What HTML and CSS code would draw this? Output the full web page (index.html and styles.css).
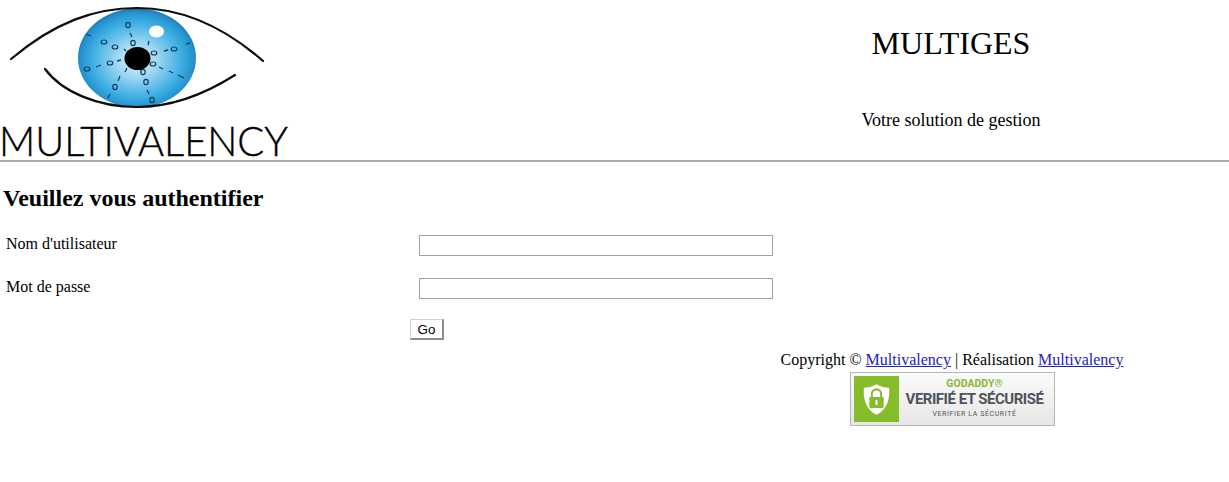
FILE: index.html
```html
<!DOCTYPE html>
<html lang="fr">
<head>
<meta charset="utf-8">
<title>MULTIGES</title>
<link rel="stylesheet" href="styles.css">
</head>
<body>
<header class="top">
  <svg class="logo" width="290" height="160" viewBox="0 0 290 160" role="img" aria-label="Multivalency">
    <defs>
      <radialGradient id="iris" cx="50%" cy="52%" r="52%">
        <stop offset="0" stop-color="#dff3fb"/>
        <stop offset="0.35" stop-color="#9bd6f1"/>
        <stop offset="0.72" stop-color="#3fb0e4"/>
        <stop offset="0.93" stop-color="#2391cf"/>
        <stop offset="1" stop-color="#1f78ab"/>
      </radialGradient>
    </defs>
    <ellipse cx="137" cy="58" rx="59" ry="49.5" fill="url(#iris)"/>
    <path class="lid" d="M11 59C55 22 95 8 137 8C180 8 222 25 263 61"/>
    <path class="lid" d="M45 69C62 92 98 107 137 107C170 107 205 94 235 75"/>
    <g class="dashes">
      <path d="M130 33L132 37M149 41L148 45M124 49L126 51M91 36L86 34M186 44L190 43M164 51L168 50M96 67L101 65M117 61L121 60M127 68L125 72M120 76L118 81M110 94L108 98M147 90L149 94M159 67L163 69M169 71L173 73M178 75L184 78"/>
    </g>
    <g class="zeros">
      <ellipse cx="128" cy="25" rx="2.2" ry="2.6"/>
      <ellipse cx="133" cy="43" rx="2.2" ry="2.6"/>
      <ellipse cx="104" cy="42" rx="2.8" ry="2"/>
      <ellipse cx="115" cy="47" rx="2.8" ry="2"/>
      <ellipse cx="174" cy="49" rx="2.8" ry="2"/>
      <ellipse cx="154" cy="53" rx="2.8" ry="2"/>
      <ellipse cx="110" cy="63" rx="2.8" ry="2"/>
      <ellipse cx="87" cy="69" rx="2.8" ry="2"/>
      <ellipse cx="153" cy="64" rx="2.8" ry="2"/>
      <ellipse cx="143" cy="72" rx="2.2" ry="2.6"/>
      <ellipse cx="146" cy="82" rx="2.2" ry="2.6"/>
      <ellipse cx="115" cy="87" rx="2.2" ry="2.6"/>
      <ellipse cx="152" cy="100" rx="2.2" ry="2.6"/>
    </g>
    <ellipse cx="137.5" cy="58.5" rx="13" ry="11.5" fill="#000"/>
    <ellipse cx="156.5" cy="31.5" rx="7.5" ry="6" fill="#fff"/>
    <text class="wordmark" x="-1" y="156" textLength="289" lengthAdjust="spacingAndGlyphs">MULTIVALENCY</text>
  </svg>
  <div class="brand">
    <h1 class="brand-title">MULTIGES</h1>
    <p class="brand-tag">Votre solution de gestion</p>
  </div>
</header>
<main class="content">
  <h2 class="heading">Veuillez vous authentifier</h2>
  <form class="login">
    <label class="field-label" for="user">Nom d'utilisateur</label>
    <input class="field-input" id="user" type="text">
    <label class="field-label" for="pass">Mot de passe</label>
    <input class="field-input" id="pass" type="password">
    <button class="go" type="button">Go</button>
  </form>
  <footer class="foot">
    <p class="copy">Copyright © <a href="#">Multivalency</a> | Réalisation <a href="#">Multivalency</a></p>
    <div class="seal">
      <div class="seal-tile">
        <svg width="27" height="33" viewBox="0 0 32 38">
          <path d="M16 1C21 4 26 5 31 5C32 20 28 31 16 37C4 31 0 20 1 5C6 5 11 4 16 1Z" fill="#fff"/>
          <path d="M10.500 17V12.500A5.500 5.500 0 0 1 21.500 12.500V17" fill="none" stroke="#86bb2a" stroke-width="2.400"/>
          <rect x="7.500" y="16" width="17" height="13" rx="1.500" fill="#86bb2a"/>
          <rect x="14.800" y="19.500" width="2.400" height="6" fill="#fff"/>
        </svg>
      </div>
      <div class="seal-text">
        <span class="seal-brand">GODADDY®</span>
        <span class="seal-main">VERIFIÉ ET SÉCURISÉ</span>
        <span class="seal-sub">VERIFIER LA SÉCURITÉ</span>
      </div>
    </div>
  </footer>
</main>
</body>
</html>
```
FILE: styles.css
```css
html, body {
  margin: 0;
  padding: 0;
  background: #fff;
  color: #000;
  font-family: "Liberation Serif", "Times New Roman", serif;
  font-size: 16px;
}
.top {
  display: flex;
  justify-content: space-between;
  height: 160px;
  border-bottom: 2px solid #a9a9a9;
}
.logo { display: block; flex: none; overflow: visible; }
.lid { fill: none; stroke: #0c0c0c; stroke-width: 2.2; stroke-linecap: round; }
.dashes path { fill: none; stroke: #12405c; stroke-width: 1.3; }
.zeros ellipse { fill: none; stroke: #12405c; stroke-width: 1.2; }
.wordmark {
  font-family: "Lato", "Liberation Sans", sans-serif;
  font-weight: 300;
  font-size: 42px;
  fill: #000;
  stroke: #000;
  stroke-width: 0.4;
}
.brand { width: 556px; text-align: center; }
.brand-title {
  margin: 25px 0 0;
  font-size: 32px;
  font-weight: normal;
  line-height: 37px;
}
.brand-tag {
  margin: 48px 0 0;
  font-size: 18px;
  line-height: 21px;
}
.heading {
  margin: 23px 0 0 3px;
  font-size: 24px;
  line-height: 27px;
}
.login {
  display: grid;
  grid-template-columns: 410px 363px;
  row-gap: 22px;
  margin-top: 23px;
  align-items: center;
}
.field-label { padding: 0 0 3px 6px; line-height: 18px; }
.field-input {
  box-sizing: border-box;
  width: 354px;
  height: 21px;
  margin: 0 0 0 9px;
  padding: 1px 2px;
  border: 1px solid #a0a0a0;
  background: #fff;
}
.go {
  grid-column: 2;
  justify-self: start;
  box-sizing: border-box;
  width: 34px;
  height: 21px;
  margin-top: -2px;
  padding: 0;
  font-family: "Liberation Sans", Arial, sans-serif;
  font-size: 13.33px;
  color: #000;
  background: #fff;
  border-style: solid;
  border-width: 1px 2px 2px 1px;
  border-color: #d0d0d0 #8c8c8c #8c8c8c #d0d0d0;
}
.foot {
  display: flex;
  flex-direction: column;
  align-items: center;
  width: 558px;
  margin-left: 673px;
}
.copy { margin: 11px 0 0; line-height: 18px; white-space: nowrap; }
.copy a { color: #2222c0; }
.seal {
  box-sizing: border-box;
  display: flex;
  align-items: center;
  width: 205px;
  height: 54px;
  margin-top: 3px;
  padding: 3px;
  border: 1px solid #b5b5b5;
  background: linear-gradient(#fbfbfb, #e6e6e6);
}
.seal-tile {
  flex: none;
  display: flex;
  align-items: center;
  justify-content: center;
  width: 45px;
  height: 46px;
  background: #86bb2a;
}
.seal-text {
  flex: 1;
  display: flex;
  flex-direction: column;
  align-items: center;
  font-family: "Roboto", "Liberation Sans", sans-serif;
  white-space: nowrap;
}
.seal-brand { color: #8ab833; font-size: 10.500px; font-weight: 700; line-height: 12px; }
.seal-main { color: #4d5459; font-size: 15px; font-weight: 700; line-height: 19px; letter-spacing: -0.5px; }
.seal-sub { color: #555; font-size: 7px; line-height: 11px; letter-spacing: 0.6px; }
```
